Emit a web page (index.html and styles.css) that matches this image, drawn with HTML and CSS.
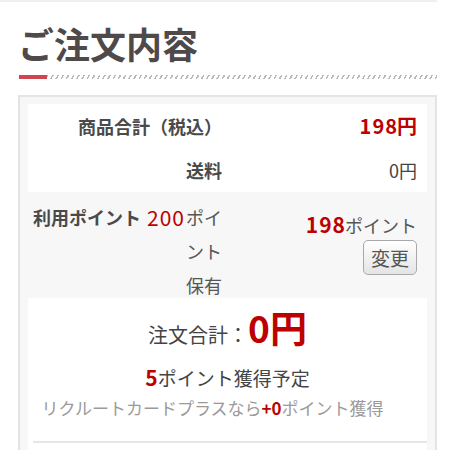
FILE: index.html
```html
<html>
<head>
    <title>ご注文内容</title>
    <link rel="stylesheet" href="styles.css">
</head>
<body>
    <div class="top-line"></div>
    <div class="page">
        <h2 class="heading">ご注文内容</h2>
        <div class="heading-rule"><span class="rule-mark"></span><span class="rule-hatch"></span></div>

        <div class="summary">
            <div class="panel">
                <div class="row">
                    <div class="label">商品合計（税込）</div>
                    <div class="value price"><span class="digits">198</span>円</div>
                </div>
                <div class="row">
                    <div class="label">送料</div>
                    <div class="value">0円</div>
                </div>
            </div>

            <div class="row points-row">
                <div class="label points-label">
                    <span class="points-title">利用ポイント</span>
                    <span class="points-own">
                        <span class="num-red">200</span>
                        <span class="points-unit">ポイント保有</span>
                    </span>
                </div>
                <div class="value points-use">
                    <div><span class="num-bold digits">198</span>ポイント</div>
                    <div class="btn">変更</div>
                </div>
            </div>

            <div class="panel total">
                <div class="total-line">注文合計：<span class="total-price">0円</span></div>
                <div class="earn-line"><span class="num-bold">5</span>ポイント獲得予定</div>
                <div class="card-line">リクルートカードプラスなら<span class="num-bold">+0</span>ポイント獲得</div>
                <div class="divider"></div>
            </div>
        </div>
    </div>
</body>
</html>
```

FILE: styles.css
```css
body {
    margin: 0;
    font-family: "Noto Sans CJK JP", "Noto Sans", sans-serif;
    color: #444;
    background: #fff;
}
.top-line {
    width: 437px;
    height: 2px;
    background-color: #f0f0f0;
}
.page {
    width: 419px;
    padding-left: 18px;
}
.heading {
    margin: 0;
    padding-top: 19px;
    font-size: 36px;
    line-height: 44px;
    font-weight: bold;
    color: #4f4949;
}
.heading-rule {
    display: flex;
    margin-top: 10px;
    margin-left: 1px;
    height: 4px;
}
.rule-mark {
    width: 28px;
    background-color: #cf4650;
}
.rule-hatch {
    flex: 1;
    background: repeating-linear-gradient(120deg, #b9b9b9 0 1.5px, transparent 1.5px 4.5px);
}
.summary {
    margin-top: 16px;
    border: 2px solid #e4e4e4;
    background-color: #f7f7f7;
    padding: 7px 8px 0 8px;
}
.panel {
    background-color: #fff;
}
.row {
    display: flex;
    font-size: 18px;
    line-height: 24px;
}
.panel .row {
    padding: 10px 0;
    height: 24px;
}
.label {
    width: 194px;
    text-align: right;
    font-weight: bold;
    color: #4a4a4a;
}
.value {
    flex: 1;
    text-align: right;
    padding-right: 10px;
}
.price {
    color: #bd0000;
    font-weight: bold;
    font-size: 20px;
}
.digits {
    letter-spacing: 1px;
    margin-right: -1px;
}
.points-row {
    padding-top: 8px;
    height: 98px;
}
.points-label {
    display: flex;
    justify-content: space-between;
    width: 189px;
    line-height: 34px;
    padding-left: 5px;
    text-align: left;
}
.points-own {
    display: flex;
    align-items: flex-start;
    font-weight: normal;
    color: #555;
}
.points-unit {
    width: 38px;
    text-align: right;
}
.num-red {
    color: #bd0000;
    font-size: 21px;
    letter-spacing: 1px;
    margin-right: -1px;
}
.num-bold {
    color: #bd0000;
    font-weight: bold;
    font-size: 21px;
}
.points-use {
    padding-top: 12px;
    color: #555;
}
.btn {
    display: inline-block;
    margin-top: 3px;
    width: 52px;
    height: 33px;
    line-height: 33px;
    text-align: center;
    font-size: 19px;
    color: #555;
    border: 1px solid #a9a9a9;
    border-radius: 5px;
    background: linear-gradient(#ffffff, #e4e4e4);
    cursor: pointer;
}
.total {
    text-align: center;
    padding-top: 9px;
    height: 146px;
}
.total-line {
    font-size: 20px;
    line-height: 40px;
    color: #444;
}
.total-price {
    color: #bd0000;
    font-weight: bold;
    font-size: 37px;
}
.earn-line {
    margin-top: 7px;
    font-size: 19px;
    line-height: 30px;
    color: #444;
}
.card-line {
    margin-top: 3px;
    padding-right: 30px;
    font-size: 17px;
    line-height: 24px;
    color: #9a9a9a;
}
.card-line .num-bold {
    font-size: 17px;
}
.divider {
    margin: 21px 0 0 5px;
    border-top: 2px solid #e6e6e6;
}
```
